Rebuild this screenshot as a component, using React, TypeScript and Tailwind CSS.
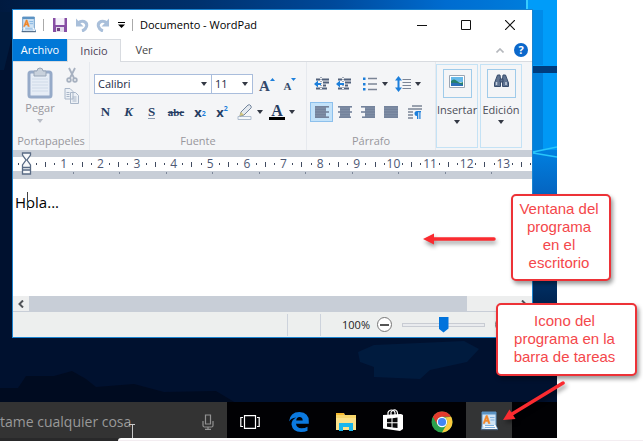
import type { ReactNode } from "react";

const UI = "font-['Open_Sans','Noto_Sans',sans-serif]";

function Caret({ muted = false }: { muted?: boolean }) {
  return (
    <svg viewBox="0 0 6 4" className={`h-[4px] w-[6px] shrink-0 ${muted ? "fill-[#b9bdc6]" : "fill-[#333844]"}`} aria-hidden="true">
      <path d="M0 0h6L3 4z" />
    </svg>
  );
}

function WordPadIcon({ className }: { className: string }) {
  return (
    <svg viewBox="0 0 18 20" className={className} aria-hidden="true">
      <path d="M2 1h14v14l2 3.500H1.500L2 15z" fill="#cfe3f5" stroke="#5a8fc0" />
      <path d="M2 1h14v2.500H2z" fill="#5b93c4" />
      <path d="M2.500 14h13l1.800 4.300H6z" fill="#f6f9fc" />
      <path d="M0.800 18.600h17" stroke="#49617c" strokeWidth="1.200" />
      <path d="M3 12.500L6 4.500h1.400l2.700 8H8.300l-.6-2H5.400l-.7 2zM5.900 9h1.300l-.6-2z" fill="#f0862a" stroke="#f0862a" strokeWidth="0.500" />
      <path d="M10 6.500h4.500M10.500 9h4M5 14.500h9M5 16.500h10" stroke="#7fb0df" strokeWidth="1.100" />
    </svg>
  );
}

function ToolButton({ label, width, active = false, children }: { label: string; width: string; active?: boolean; children: ReactNode }) {
  return (
    <button
      type="button"
      aria-label={label}
      className={`flex h-5 shrink-0 items-center justify-center gap-1 border ${width} ${active ? "border-[#8dc0ec] bg-[#c3e2f9]" : "border-transparent"}`}
    >
      {children}
    </button>
  );
}

function Lines({ rows }: { rows: [number, number][] }) {
  const inset = Math.max(...rows.map((r) => r[0]));
  const end = Math.min(...rows.map((r) => r[0] + r[1]));
  return (
    <svg viewBox="0 0 14 12" className="h-3 w-[14px]" aria-hidden="true">
      <rect x={inset} y="0" width={end - inset} height="12" fill="#8391a8" />
      {rows.map(([x, w], i) => (
        <rect key={i} x={x} y={i * 2.600} width={w} height="1.600" fill="#74839c" />
      ))}
    </svg>
  );
}

function Indent({ flip = false }: { flip?: boolean }) {
  return (
    <svg viewBox="0 0 16 14" className="h-[14px] w-[16px]" aria-hidden="true">
      <path d="M2 2.500h4M8 2.500h7M9 5.500h6M9 8.500h3M8 11.500h5M2 11.500h4" stroke="#51617b" strokeWidth="1.800" />
      <path d="M7 0v14" stroke="#51617b" strokeDasharray="1 1" />
      <path d={flip ? "M0 7l4-3.500v2.500h4v2H4v2.500z" : "M0 7l4-3.500v2.500h3v2H4v2.500z"} fill="#1c7fdb" />
    </svg>
  );
}

function Group({ label, className, children }: { label: string; className: string; children: ReactNode }) {
  return (
    <section aria-label={label} className={`flex shrink-0 flex-col border-r border-[#e6e9ee] ${className}`}>
      <div className="flex-1">{children}</div>
      <p className="text-center text-[11px] leading-4 text-[#98979d]">{label}</p>
    </section>
  );
}

function ClipboardGroup() {
  return (
    <Group label="Portapapeles" className="w-[77px] pb-px">
      <div className="flex gap-2 pl-[11px] pt-1">
        <button type="button" className="flex w-8 flex-col items-center text-[11px] leading-4 text-[#98979d]">
          <svg viewBox="0 0 26 32" className="mt-px h-8 w-[26px]" aria-hidden="true">
            <rect x="2" y="5" width="22" height="25" rx="2" fill="#e6edf6" stroke="#96aac8" strokeWidth="3" />
            <path d="M5 12h16M5 15h16M5 18h16M5 21h16M5 24h16" stroke="#cfdae8" />
            <path d="M7 4h3q0-3 3-3t3 3h3v5H7z" fill="#c8d1dc" stroke="#98a6b8" />
          </svg>
          <span className="mt-px">Pegar</span>
          <span className="mt-[3px]"><Caret muted /></span>
        </button>
        <div className="flex flex-col items-center gap-1 pt-px">
          <button type="button" aria-label="Cortar">
            <svg viewBox="0 0 12 17" className="h-[17px] w-3" fill="none" stroke="#a7b1c0" strokeWidth="1.800" aria-hidden="true">
              <path d="M3 1l5 10M9 1L4 11" />
              <circle cx="3" cy="13" r="1.800" />
              <circle cx="9" cy="13" r="1.800" />
            </svg>
          </button>
          <button type="button" aria-label="Copiar">
            <svg viewBox="0 0 16 16" className="h-4 w-4" fill="#edf1f6" stroke="#a9b6c8" aria-hidden="true">
              <path d="M1 .5h5l3 3V11H1zM6.500 4.500h5l3 3v8h-8z" />
              <path d="M2.500 4.500h3M2.500 6.500h3M2.500 8.500h3M8.500 9h4M8.500 11h4M8.500 13h4" />
            </svg>
          </button>
        </div>
      </div>
    </Group>
  );
}

function FontGroup() {
  return (
    <Group label="Fuente" className="w-[217px] pb-px">
      <div className="flex pl-1 pt-3">
        <label className="relative flex w-[118px] items-center border border-[#a9bddc] bg-white">
          <span className="sr-only">Fuente</span>
          <select className="h-[18px] w-full appearance-none pl-[3px] text-[11px] text-[#222b45]" defaultValue="Calibri">
            <option>Calibri</option>
          </select>
          <span className="pointer-events-none absolute right-1 flex"><Caret /></span>
        </label>
        <label className="relative -ml-px flex w-[42px] items-center border border-[#a9bddc] bg-white">
          <span className="sr-only">Tamaño</span>
          <select className="h-[18px] w-full appearance-none pl-[3px] text-[11px] text-[#222b45]" defaultValue="11">
            <option>11</option>
          </select>
          <span className="pointer-events-none absolute right-1 flex"><Caret /></span>
        </label>
        <div className="flex gap-1 pl-1 font-['Liberation_Serif',serif] font-bold text-[#33496b]">
          <ToolButton label="Agrandar fuente" width="w-[20px]">
            <span className="flex pt-1 text-[15px] leading-4">A<svg viewBox="0 0 5 3" className="h-[3px] w-[5px] fill-[#1c7fdb]"><path d="M0 3h5L2.500 0z" /></svg></span>
          </ToolButton>
          <ToolButton label="Reducir fuente" width="w-[18px]">
            <span className="flex pt-1 text-[11px] leading-4">A<svg viewBox="0 0 5 3" className="h-[3px] w-[5px] fill-[#1c7fdb]"><path d="M0 0h5L2.500 3z" /></svg></span>
          </ToolButton>
        </div>
      </div>
      <div className="flex pl-1 pt-2 font-['Liberation_Serif',serif] text-[13px] leading-4 text-[#263d63]">
        <ToolButton label="Negrita" width="w-[23px]"><b>N</b></ToolButton>
        <ToolButton label="Cursiva" width="w-[23px]"><b className="italic">K</b></ToolButton>
        <ToolButton label="Subrayado" width="w-[23px]"><span className="border-b border-[#8b9bb0] font-bold leading-[13px]">S</span></ToolButton>
        <ToolButton label="Tachado" width="w-[26px]"><b className="text-[11px] line-through">abc</b></ToolButton>
        <ToolButton label="Subíndice" width="w-[22px]">
          <b className={`flex text-[13px] leading-4 ${UI}`}>x<span className="pt-1 text-[7px] leading-3 text-[#1c7fdb]">2</span></b>
        </ToolButton>
        <ToolButton label="Superíndice" width="w-[22px]">
          <b className={`flex text-[13px] leading-4 ${UI}`}>x<span className="text-[7px] leading-[10px] text-[#1c7fdb]">2</span></b>
        </ToolButton>
        <ToolButton label="Resaltado" width="w-[33px]">
          <svg viewBox="0 0 16 16" className="h-4 w-4" aria-hidden="true">
            <path d="M1 12.500h13v3H1z" fill="#f4f7fa" stroke="#aebccd" />
            <path d="M3 12l1-4 7-7q2-1 3 1t-1 3L7 11z" fill="#e4e9ef" stroke="#73859d" />
            <path d="M2.500 12l1.500-4L7 11z" fill="#d4c67c" />
          </svg>
          <Caret />
        </ToolButton>
        <ToolButton label="Color de texto" width="w-[32px]">
          <span className="flex h-4 w-4 flex-col items-center border-b-[3px] border-black text-[16px] font-bold leading-[13px]">A</span>
          <Caret />
        </ToolButton>
      </div>
    </Group>
  );
}

function ParagraphGroup() {
  return (
    <Group label="Párrafo" className="w-[129px] pb-px">
      <div className="flex pl-1 pt-3">
        <ToolButton label="Reducir sangría" width="w-[22px]"><Indent /></ToolButton>
        <ToolButton label="Aumentar sangría" width="w-[22px]"><Indent flip /></ToolButton>
        <ToolButton label="Viñetas" width="w-[36px]">
          <svg viewBox="0 0 15 14" className="ml-1 h-[14px] w-[15px]" aria-hidden="true">
            <path d="M0 .5h2.500V3H0zM0 6h2.500v2.500H0zM0 11h2.500v2.500H0z" fill="#1c7fdb" />
            <path d="M5 1.500h9M5 7h9M5 12.500h9" stroke="#7b8596" strokeWidth="1.300" />
          </svg>
          <Caret />
        </ToolButton>
        <ToolButton label="Interlineado" width="w-[34px]">
          <svg viewBox="0 0 16 16" className="h-4 w-4" aria-hidden="true">
            <path d="M3.500 0L7 4.500H4.500v7H7L3.500 16 0 11.500h2.500v-7H0z" fill="#1c7fdb" />
            <path d="M7.500 3.500H16M7.500 6.500H16M7.500 9.500H16M7.500 12.500H16" stroke="#7b8596" />
          </svg>
          <Caret />
        </ToolButton>
      </div>
      <div className="flex pl-[3px] pt-2">
        <ToolButton label="Alinear a la izquierda" width="w-[23px]" active><Lines rows={[[0, 14], [0, 11], [0, 14], [0, 11], [0, 14]]} /></ToolButton>
        <ToolButton label="Centrar" width="w-[23px]"><Lines rows={[[0, 14], [2, 10], [0, 14], [2, 10], [1, 12]]} /></ToolButton>
        <ToolButton label="Alinear a la derecha" width="w-[23px]"><Lines rows={[[0, 14], [4, 10], [0, 14], [4, 10], [1, 13]]} /></ToolButton>
        <ToolButton label="Justificar" width="w-[23px]"><Lines rows={[[0, 14], [0, 14], [0, 14], [0, 14], [0, 14]]} /></ToolButton>
        <ToolButton label="Párrafo" width="w-[25px]">
          <svg viewBox="0 0 14 14" className="h-[14px] w-[14px]" aria-hidden="true">
            <path d="M4 1h10M0 4h14M0 7h5M0 10h5M0 13h5" stroke="#7b8596" strokeWidth="1.300" />
            <path d="M13 6H9a2.500 2.500 0 000 5v3h1.300V7.300h1V14h1.200V7.300H13z" fill="#1c7fdb" />
          </svg>
        </ToolButton>
      </div>
    </Group>
  );
}

function BigButton({ label, children }: { label: string; children: ReactNode }) {
  return (
    <button type="button" className="flex h-[84px] w-[42px] shrink-0 flex-col items-center border border-[#c4e2f5] pt-1 text-[11px] leading-4 text-[#4b4d57]">
      <span className="flex h-[29px] w-[29px] items-center justify-center border border-[#9fcbea] pb-[5px]">{children}</span>
      <span className="mt-1">{label}</span>
      <span className="mt-[2px]"><Caret /></span>
    </button>
  );
}

function Ruler() {
  const marks = Array.from({ length: 57 }, (_, i) => i - 1);
  return (
    <div className="h-[29px] shrink-0 bg-[#c8ced7] pt-[7px]">
      <div className="relative flex h-[14px] items-center justify-between bg-white pl-[5px] pr-px text-[12px] leading-[14px] text-[#4d5874]">
        {marks.map((m) => (
          <span key={m} className="flex w-0 justify-center">
            {m === 0 ? null : m > 0 && m % 4 === 0 ? (
              <span>{m / 4}</span>
            ) : Math.abs(m) % 2 === 0 ? (
              <span className="h-[5px] w-px shrink-0 bg-[#414b60]" />
            ) : (
              <span className="h-[2px] w-px shrink-0 bg-[#414b60]" />
            )}
          </span>
        ))}
        <svg viewBox="0 0 10 24" className="absolute -top-[5px] left-2 h-6 w-[11px]" fill="#f7f8fa" stroke="#596b85" strokeWidth="1.300" aria-hidden="true">
          <path d="M1 3V1h8v2L5.500 8 9 13v9H1v-9l3.500-5z" />
          <path d="M1 15.500h8M1 18h8" />
        </svg>
      </div>
      <div className="flex justify-between pl-[60px] pr-[40px] pt-px">
        {[1, 2, 3, 4, 5, 6, 7, 8, 9, 10].map((n) => (
          <span key={n} className="h-[2px] w-px bg-[#7d8799]" />
        ))}
      </div>
    </div>
  );
}

function TitleBar() {
  return (
    <header className="flex h-[29px] shrink-0 items-center pr-[17px] text-black">
      <WordPadIcon className="ml-2 h-[17px] w-[15px]" />
      <span className="ml-[7px] h-3 w-px bg-[#aaa]" />
      <button type="button" aria-label="Guardar" className="ml-[9px]">
        <svg viewBox="0 0 14 14" className="h-[14px] w-[14px]" aria-hidden="true">
          <path d="M0 0h14v14H0z" fill="#874fa4" />
          <path d="M2.500 0h9v7h-9z" fill="#f4effa" />
          <path d="M3 9h8v5H3z" fill="#e2dceb" />
          <path d="M4 10h3v3H4z" fill="#704282" />
        </svg>
      </button>
      <button type="button" aria-label="Deshacer" className="ml-2">
        <svg viewBox="0 0 14 14" className="h-[14px] w-[14px]" fill="none" stroke="#a9bfda" strokeWidth="3" aria-hidden="true">
          <path d="M3 5q3-2.500 6-1.500 3.500 1.500 2.500 5T7 13" />
          <path d="M1 .5v8h7.500z" fill="#a9bfda" stroke="none" />
        </svg>
      </button>
      <button type="button" aria-label="Rehacer" className="ml-[7px]">
        <svg viewBox="0 0 14 14" className="h-[14px] w-[14px]" fill="none" stroke="#a9bfda" strokeWidth="3" aria-hidden="true">
          <path d="M11 5Q8 2.500 5 3.500 1.500 5 2.500 8.500T7 13" />
          <path d="M13 .5v8H5.500z" fill="#a9bfda" stroke="none" />
        </svg>
      </button>
      <button type="button" aria-label="Personalizar barra" className="ml-2">
        <svg viewBox="0 0 7 6" className="h-[6px] w-[7px]" aria-hidden="true"><path d="M0 0h7v1H0zM0 2.500h7L3.500 6z" /></svg>
      </button>
      <span className="ml-[7px] h-3 w-px bg-[#aaa]" />
      <h1 className="ml-[7px] flex-1 whitespace-nowrap text-[11px] leading-4">Documento - WordPad</h1>
      <div className="flex gap-[34px]">
        <button type="button" aria-label="Minimizar"><svg viewBox="0 0 10 10" className="h-[10px] w-[10px]" stroke="#111" aria-hidden="true"><path d="M0 5.500h10" /></svg></button>
        <button type="button" aria-label="Maximizar"><svg viewBox="0 0 10 10" className="h-[10px] w-[10px]" fill="none" stroke="#111" aria-hidden="true"><path d="M.5.5h9v9h-9z" /></svg></button>
        <button type="button" aria-label="Cerrar"><svg viewBox="0 0 10 10" className="h-[10px] w-[10px]" stroke="#111" strokeWidth="1.200" aria-hidden="true"><path d="M0 0l10 10M10 0L0 10" /></svg></button>
      </div>
    </header>
  );
}

function WordPadWindow() {
  return (
    <main className="relative ml-3 mr-6 flex h-[329px] flex-col overflow-hidden border border-[#1b83cf] bg-white">
      <TitleBar />
      <nav className="flex h-[23px] shrink-0 items-end border-b border-[#d8dbe0] text-[11px] leading-[22px]">
        <button type="button" className="h-[22px] w-[54px] self-start bg-[#0078d7] text-white">Archivo</button>
        <button type="button" className="-mb-px h-[23px] w-[54px] border border-b-0 border-[#d8dbe0] bg-[#f4f5f7] text-[#4d4358]">Inicio</button>
        <button type="button" className="h-[22px] w-[46px] text-[#444]">Ver</button>
        <div className="flex h-[22px] flex-1 items-center justify-end gap-[10px] pr-1">
          <button type="button" aria-label="Contraer cinta">
            <svg viewBox="0 0 8 5" className="h-[5px] w-2" fill="none" stroke="#b5b8bd" strokeWidth="1.600" aria-hidden="true"><path d="M.5 4.500L4 1l3.500 3.500" /></svg>
          </button>
          <button type="button" aria-label="Ayuda" className="h-[14px] w-[14px] rounded-full bg-[#0b68cb] text-[11px] font-bold leading-[14px] text-white">?</button>
        </div>
      </nav>
      <div className="flex h-[88px] shrink-0 bg-[#f4f5f7]">
        <ClipboardGroup />
        <FontGroup />
        <ParagraphGroup />
        <div className="flex gap-[2px] pt-[2px]">
          <BigButton label="Insertar">
            <svg viewBox="0 0 16 13" className="h-[13px] w-4" aria-hidden="true">
              <path d="M.5.500h15v12H.5z" fill="#fff" stroke="#9aa5b3" />
              <path d="M2 2h12v5H2z" fill="#66b9ea" />
              <path d="M2 6q3-3 6 0t6 1v4H2z" fill="#26806b" />
              <path d="M2 8q5-1 12 2v1H2z" fill="#2b6fb9" />
            </svg>
          </BigButton>
          <BigButton label="Edición">
            <svg viewBox="0 0 15 14" className="h-[14px] w-[15px]" fill="#5f7391" stroke="#384d6d" aria-hidden="true">
              <path d="M3.500 1h2.500l.5 4v7.500h-6V9zM9 1h2.500l3 8v3.500h-6V5z" />
              <path d="M6 5h3v3H6z" />
              <path d="M2.500 8v3M12 8v3" stroke="#c3cede" strokeWidth="1.500" />
            </svg>
          </BigButton>
        </div>
      </div>
      <Ruler />
      <div className="relative flex min-h-0 flex-1">
        <textarea
          aria-label="Documento"
          defaultValue="Hola..."
          className="w-full resize-none overflow-hidden bg-white pl-[2px] pt-[13px] text-[15px] leading-5 text-black outline-none"
        />
        <span className="absolute left-[14px] top-[13px] h-[18px] w-px bg-[#444]" />
      </div>
      <div className="flex h-[15px] shrink-0 items-stretch bg-[#edeeee]">
        <button type="button" aria-label="Desplazar a la izquierda" className="flex w-4 items-center justify-center">
          <svg viewBox="0 0 6 8" className="h-2 w-[6px]" fill="none" stroke="#505357" strokeWidth="2" aria-hidden="true"><path d="M5 .5L1.500 4 5 7.500" /></svg>
        </button>
        <div className="flex-1"><div className="h-full w-[90%] bg-[#c8ced7]" /></div>
        <button type="button" aria-label="Desplazar a la derecha" className="flex w-4 items-center justify-center">
          <svg viewBox="0 0 6 8" className="h-2 w-[6px]" fill="none" stroke="#505357" strokeWidth="2" aria-hidden="true"><path d="M1 .5L4.500 4 1 7.500" /></svg>
        </button>
      </div>
      <footer className="flex h-[26px] shrink-0 items-center justify-end border-t border-[#c8ced7] bg-[#edefee] pr-[22px]">
        <span className="h-[22px] w-[34px] border-x border-[#cdd3dc]" />
        <label htmlFor="zoom" className="ml-[21px] text-[11px] leading-4 text-[#222]">100%</label>
        <button type="button" aria-label="Alejar" className="ml-[7px] flex h-[15px] w-[15px] items-center justify-center rounded-full border border-[#777] bg-white">
          <span className="h-[2px] w-[9px] bg-[#555]" />
        </button>
        <input
          id="zoom"
          type="range"
          defaultValue={50}
          className="ml-[10px] h-4 w-[83px] appearance-none bg-transparent [&::-webkit-slider-runnable-track]:h-1 [&::-webkit-slider-runnable-track]:border [&::-webkit-slider-runnable-track]:border-[#c8ccd3] [&::-webkit-slider-runnable-track]:bg-[#e9ebee] [&::-webkit-slider-thumb]:-mt-[7px] [&::-webkit-slider-thumb]:h-4 [&::-webkit-slider-thumb]:w-[10px] [&::-webkit-slider-thumb]:appearance-none [&::-webkit-slider-thumb]:bg-[#0073dc] [&::-webkit-slider-thumb]:[clip-path:polygon(0_0,100%_0,100%_75%,50%_100%,0_75%)]"
        />
        <button type="button" aria-label="Acercar" className="ml-[10px] h-[15px] w-[15px] rounded-full border border-[#777] bg-white" />
      </footer>
    </main>
  );
}

function Wallpaper() {
  return (
    <svg viewBox="0 0 557 441" preserveAspectRatio="none" className="absolute inset-0 h-full w-full" aria-hidden="true">
      <defs>
        <linearGradient id="top" x1="0" x2="1">
          <stop offset="0" stopColor="#001a40" />
          <stop offset="0.350" stopColor="#00306c" />
          <stop offset="0.600" stopColor="#00499b" />
          <stop offset="0.800" stopColor="#006cd0" />
          <stop offset="1" stopColor="#0083e0" />
        </linearGradient>
        <linearGradient id="low" x1="0" x2="0" y1="0" y2="1">
          <stop offset="0" stopColor="#0080e0" />
          <stop offset="0.350" stopColor="#0756b0" />
          <stop offset="0.700" stopColor="#002f64" />
          <stop offset="1" stopColor="#00112f" />
        </linearGradient>
      </defs>
      <rect width="557" height="441" fill="#00112f" />
      <rect width="557" height="12" fill="url(#top)" />
      <path d="M0 12h12v25L4 70H0z" fill="#001a3d" />
      <path d="M527 0h30v66h-30z" fill="#009cf9" />
      <path d="M526 0h2v10h-2z" fill="#37cbff" />
      <path d="M533 10h10v55h-10z" fill="#008be9" />
      <path d="M533 66h24v7h-24z" fill="#003c7d" />
      <path d="M533 73h24v77h-24z" fill="#0098f5" />
      <path d="M533 73h10v77h-10z" fill="#0080dc" />
      <path d="M533 150h24v190h-24z" fill="url(#low)" />
      <path d="M533 152l24-5M533 153l24 4" stroke="#27c6fb" strokeWidth="1.500" />
      <path d="M358 352l16-7 90-4 15 8-12 13-37 8-10 9-46-2v-10l-14-5z" fill="#001b3e" />
      <path d="M0 388h18l8-12h28l18-5 14 8 10 8 38-3 30 8 52-1 20 12H0z" fill="#000b20" />
    </svg>
  );
}

function TaskButton({ label, active = false, children }: { label: string; active?: boolean; children: ReactNode }) {
  return (
    <button type="button" aria-label={label} className={`flex w-[46px] shrink-0 items-center justify-center ${active ? "bg-[#333435]" : ""}`}>
      {children}
    </button>
  );
}

function Taskbar() {
  return (
    <footer className="relative mt-16 flex h-[36px] bg-[#010104]">
      <div className="flex w-[227px] shrink-0 items-center bg-[#333] pr-3 pt-1">
        <input aria-label="Buscar" placeholder="tame cualquier cosa" className="min-w-0 flex-1 text-[14px] leading-5 text-[#999] outline-none placeholder:text-[#999]" />
        <button type="button" aria-label="Micrófono">
          <svg viewBox="0 0 14 16" className="h-4 w-[14px]" fill="none" stroke="#929292" strokeWidth="1.200" aria-hidden="true">
            <path d="M4.500 1h5v9h-5zM2 7v4.500q0 1.500 1.500 1.500h7q1.500 0 1.500-1.500V7M7 13v2.500M4 15.400h6" />
          </svg>
        </button>
      </div>
      <TaskButton label="Vista de tareas">
        <svg viewBox="0 0 20 14" className="mt-[3px] h-[14px] w-5" fill="none" stroke="#fff" strokeWidth="1.200" aria-hidden="true">
          <path d="M4.500.6h11v12.800h-11zM3 2.500H.8v9H3M17 2.500h2.200v9H17" />
        </svg>
      </TaskButton>
      <TaskButton label="Edge">
        <svg viewBox="0 0 20 20" className="ml-[6px] mt-[3px] h-5 w-5" aria-hidden="true">
          <path d="M0 9.500Q1 0 10.500 0 20 .5 19.800 9.500v2.200H7q.5 4.300 5.500 4.500 3.500 0 6-1.500v4Q16 20 12 20 3.500 20 2.500 12.500 2.300 8 7 5.500 2 6 0 9.500zM7.200 8.500h6.500q0-3.500-3.200-3.500-3 .2-3.300 3.500z" fill="#0b79df" />
        </svg>
      </TaskButton>
      <TaskButton label="Explorador de archivos">
        <svg viewBox="0 0 20 18" className="ml-[7px] mt-[3px] h-[18px] w-5" aria-hidden="true">
          <path d="M0 0h8l1 2h11v15H0z" fill="#f7d66b" />
          <path d="M0 0h8v2H0z" fill="#f6b92e" />
          <path d="M0 5h20v12H0z" fill="#fbe18a" />
          <path d="M3 10h14v8h-4v-4H7v4H3z" fill="#19b6ec" />
        </svg>
      </TaskButton>
      <TaskButton label="Tienda">
        <svg viewBox="0 0 22 22" className="ml-[10px] h-[22px] w-[22px]" aria-hidden="true">
          <path d="M6 7V3.500Q7 1 9.500 1T13 3.500V7M9 6V3q2-2.500 4.500-2Q16 2 15.500 6" fill="none" stroke="#fff" strokeWidth="1.200" />
          <path d="M1 6l18-1 2 1v14l-3 2L1 19.500z" fill="#fff" />
          <path d="M5 9.800l4.500-.5v4H5zM10.500 9.200l5-.6v4.700h-5zM5 14.300h4.500v4L5 17.800zM10.500 14.300h5V19l-5-.6z" fill="#08080a" />
        </svg>
      </TaskButton>
      <TaskButton label="Chrome">
        <svg viewBox="0 0 22 22" className="ml-[15px] mt-[3px] h-[22px] w-[22px]" aria-hidden="true">
          <circle cx="11" cy="11" r="10.500" fill="#2ba24c" />
          <path d="M11 .5a10.500 10.500 0 019.100 5.300H11a5.300 5.300 0 00-4.600 8L1.900 5.800A10.500 10.500 0 0111 .5z" fill="#e33b2e" />
          <path d="M20.100 5.800A10.500 10.500 0 0111 21.500l4.600-7.900A5.300 5.300 0 0014 6.500z" fill="#fcca3e" />
          <circle cx="11" cy="11" r="5.200" fill="#fff" />
          <circle cx="11" cy="11" r="4.100" fill="#4286f4" />
        </svg>
      </TaskButton>
      <span className="w-[9px] shrink-0" />
      <TaskButton label="WordPad" active><WordPadIcon className="mt-[2px] h-5 w-[18px]" /></TaskButton>
    </footer>
  );
}

function Callout({ className, children }: { className: string; children: ReactNode }) {
  return (
    <p className={`absolute rounded-[5px] border-2 border-[#ed3237] bg-white pr-1 text-center font-['Liberation_Sans',Arial,sans-serif] text-[15px] leading-[18px] text-[#f4474b] shadow-[2px_3px_4px_rgba(0,0,0,0.4)] ${className}`}>
      {children}
    </p>
  );
}

export default function App() {
  return (
    <div className={`overflow-hidden bg-white pb-1 ${UI}`}>
      <div className="relative mr-[86px] pt-[9px]">
        <Wallpaper />
        <WordPadWindow />
        <Taskbar />
        <div className="relative h-[3px] bg-[#29292a]" />
        <div className="absolute -right-[86px] bottom-0 left-[118px] h-[3px] rounded-tl-[3px] border-b border-[#f3edf1] bg-white" />
        <svg viewBox="0 0 6 14" className="absolute bottom-[3px] left-[129px] h-[14px] w-[6px]" fill="none" stroke="#c8c8c8" aria-hidden="true">
          <path d="M0 .5h6M3.500 0v14" />
        </svg>
        <svg viewBox="0 0 80 20" className="absolute right-[57px] top-[229px] h-5 w-20 drop-shadow-[1px_3px_2px_rgba(0,0,0,0.4)]" aria-hidden="true">
          <path d="M12 10h62" stroke="#fa2b30" strokeWidth="3.500" strokeLinecap="round" />
          <path d="M3 10L14 4.500v11z" fill="#fa2b30" />
        </svg>
        <Callout className="-right-[54px] top-[194px] w-[100px] pb-[7px] pt-1">
          Ventana del<br />programa<br />en el<br />escritorio
        </Callout>
        <Callout className="-right-[80px] top-[303px] w-[141px] pb-2 pt-[7px]">
          Icono del<br />programa en la<br />barra de tareas
        </Callout>
        <svg viewBox="0 0 70 50" className="absolute -right-[13px] top-[376px] h-[50px] w-[70px] drop-shadow-[2px_3px_2px_rgba(0,0,0,0.4)]" aria-hidden="true">
          <path d="M12 38L63 7" stroke="#fa2b30" strokeWidth="3.500" strokeLinecap="round" />
          <path d="M3 44L9.500 33.500 15.500 43z" fill="#fa2b30" />
        </svg>
      </div>
    </div>
  );
}
